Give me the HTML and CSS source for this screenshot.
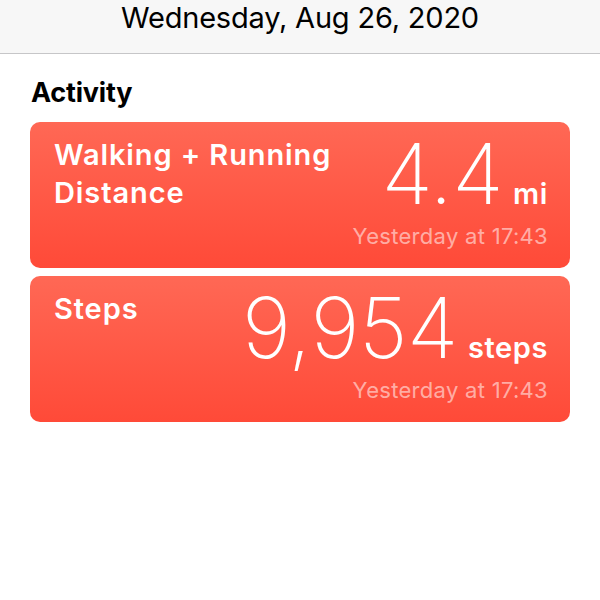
FILE: index.html
```html
<!DOCTYPE html>
<html lang="en">
<head>
<meta charset="utf-8">
<title>Activity</title>
<link rel="stylesheet" href="styles.css">
</head>
<body>
<header class="topbar">
  <div class="date">Wednesday, Aug 26, 2020</div>
</header>
<main class="content">
  <h2 class="section-title">Activity</h2>
  <div class="cards">
    <div class="card">
      <div class="card-title">Walking + Running<br>Distance</div>
      <div class="card-right">
        <div class="value-row">
          <span class="value">4.4</span>
          <span class="unit">mi</span>
        </div>
        <div class="stamp">Yesterday at 17:43</div>
      </div>
    </div>
    <div class="card">
      <div class="card-title">Steps</div>
      <div class="card-right">
        <div class="value-row">
          <span class="value">9,954</span>
          <span class="unit">steps</span>
        </div>
        <div class="stamp">Yesterday at 17:43</div>
      </div>
    </div>
  </div>
</main>
</body>
</html>
```
FILE: styles.css
```css
* { box-sizing: border-box; }
html, body {
  margin: 0;
  padding: 0;
  background: #ffffff;
  font-family: Inter, "Noto Sans", "Liberation Sans", sans-serif;
  color: #000;
}
.topbar {
  height: 54px;
  background: #f7f7f7;
  border-bottom: 1px solid #c6c6c8;
  text-align: center;
}
.date {
  font-size: 29px;
  line-height: 36px;
  font-weight: 400;
  letter-spacing: -0.2px;
}
.content {
  padding: 22px 30px 0 30px;
}
.section-title {
  margin: 0 0 12px 1px;
  font-size: 27px;
  line-height: 34px;
  font-weight: 700;
  letter-spacing: -0.2px;
}
.cards {
  display: flex;
  flex-direction: column;
  gap: 8px;
}
.card {
  height: 146px;
  border-radius: 10px;
  background: linear-gradient(180deg, #ff6855 0%, #ff4a38 100%);
  color: #fff;
  display: flex;
  padding: 14px 22px 0 24px;
}
.card-title {
  font-size: 29px;
  line-height: 38px;
  font-weight: 600;
  letter-spacing: 0.9px;
}
.card-right {
  margin-left: auto;
  display: flex;
  flex-direction: column;
  align-items: flex-end;
}
.value-row {
  display: flex;
  align-items: baseline;
  gap: 10px;
  margin-top: -2px;
}
.value {
  font-size: 84px;
  line-height: 80px;
  font-weight: 200;
  letter-spacing: -0.5px;
}
.unit {
  font-size: 29px;
  font-weight: 600;
  letter-spacing: 0.6px;
}
.stamp {
  margin-top: 9px;
  font-size: 22px;
  line-height: 26px;
  letter-spacing: 0.3px;
  color: rgba(255, 255, 255, 0.55);
}
```
